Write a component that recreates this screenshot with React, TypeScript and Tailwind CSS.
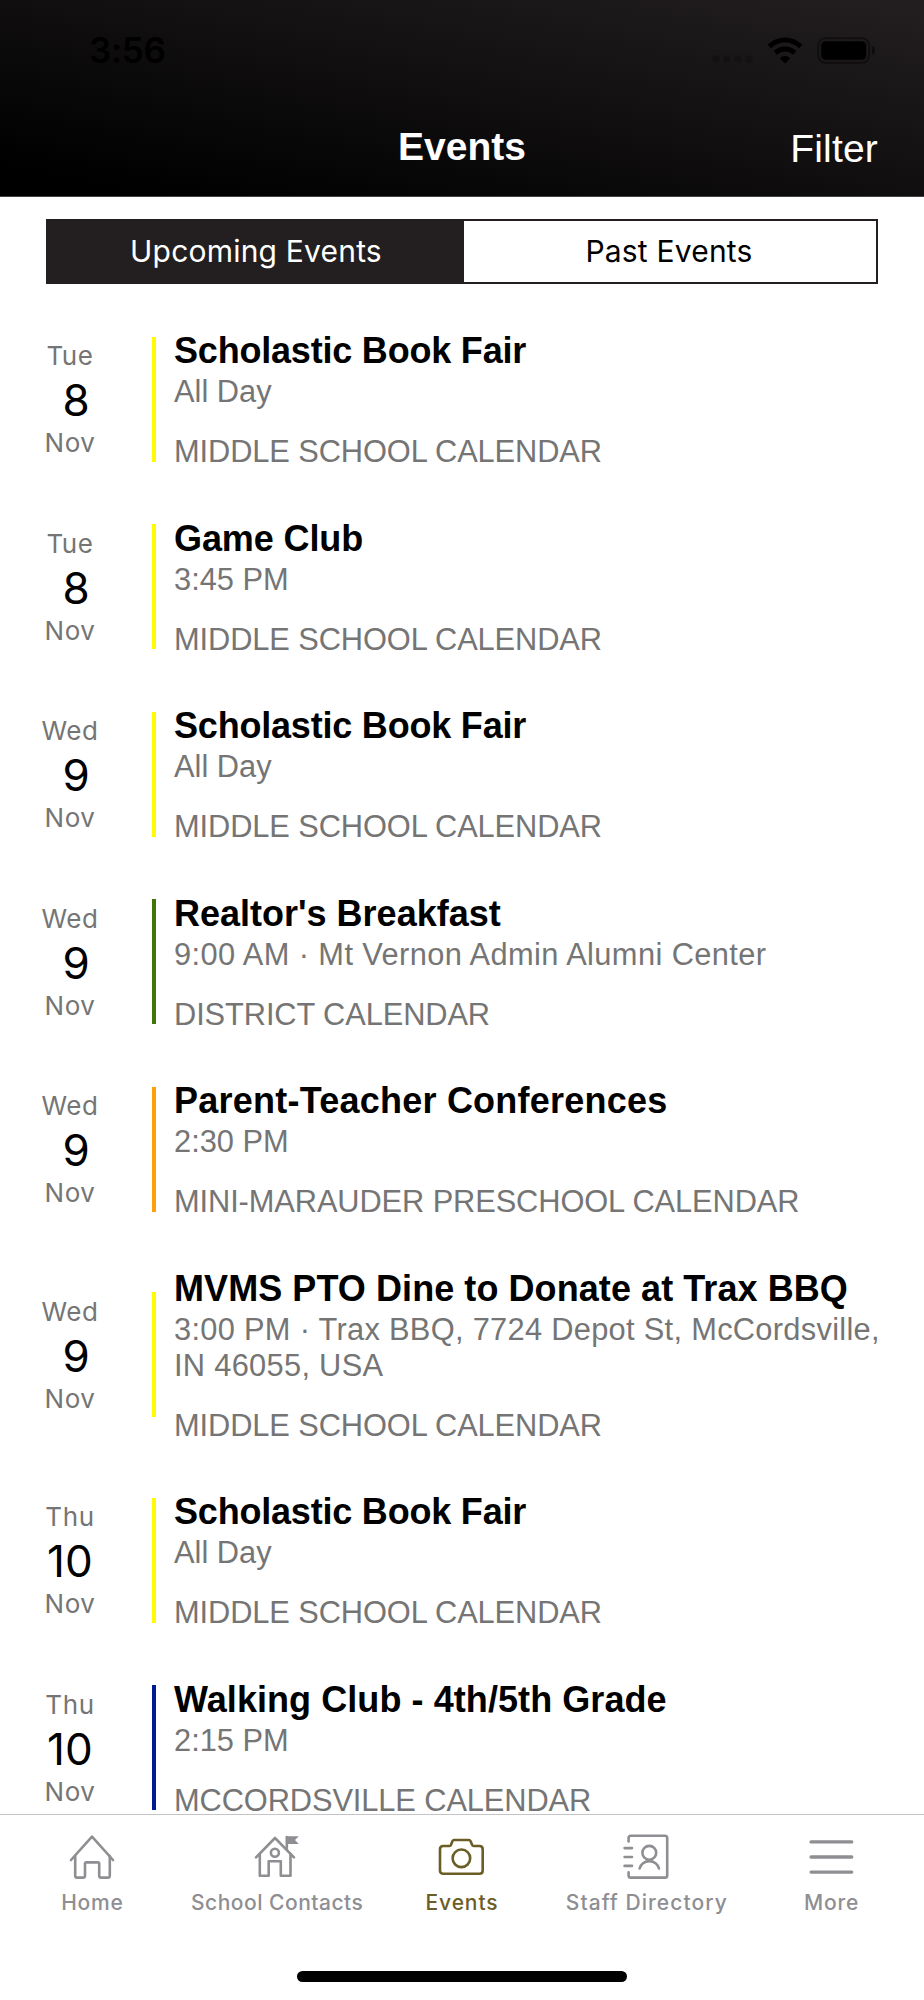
import type { ReactNode } from 'react';
import clsx from 'clsx';

type Event = {
  weekday: string;
  day: number;
  title: string;
  titleClass?: string;
  details: string;
  detailsClass?: string;
  calendar: string;
  color: string;
};

const MIDDLE_SCHOOL = {
  calendar: 'MIDDLE SCHOOL CALENDAR',
  color: 'bg-[#fffb00]',
};

const BOOK_FAIR = {
  title: 'Scholastic Book Fair',
  titleClass: 'tracking-[-0.2px]',
  details: 'All Day',
  ...MIDDLE_SCHOOL,
};

const events: Event[] = [
  { weekday: 'Tue', day: 8, ...BOOK_FAIR },
  {
    weekday: 'Tue',
    day: 8,
    title: 'Game Club',
    titleClass: 'tracking-[-0.1px]',
    details: '3:45 PM',
    ...MIDDLE_SCHOOL,
  },
  { weekday: 'Wed', day: 9, ...BOOK_FAIR },
  {
    weekday: 'Wed',
    day: 9,
    title: "Realtor's Breakfast",
    details: '9:00 AM · Mt Vernon Admin Alumni Center',
    detailsClass: 'tracking-[0.4px]',
    calendar: 'DISTRICT CALENDAR',
    color: 'bg-[#417505]',
  },
  {
    weekday: 'Wed',
    day: 9,
    title: 'Parent-Teacher Conferences',
    titleClass: 'tracking-[0.23px]',
    details: '2:30 PM',
    calendar: 'MINI-MARAUDER PRESCHOOL CALENDAR',
    color: 'bg-[#ff9f0a]',
  },
  {
    weekday: 'Wed',
    day: 9,
    title: 'MVMS PTO Dine to Donate at Trax BBQ',
    titleClass: 'tracking-[0.07px]',
    details: '3:00 PM · Trax BBQ, 7724 Depot St, McCordsville, IN 46055, USA',
    detailsClass: 'tracking-[0.3px]',
    ...MIDDLE_SCHOOL,
  },
  { weekday: 'Thu', day: 10, ...BOOK_FAIR },
  {
    weekday: 'Thu',
    day: 10,
    title: 'Walking Club - 4th/5th Grade',
    titleClass: 'tracking-[0.07px]',
    details: '2:15 PM',
    calendar: 'MCCORDSVILLE CALENDAR',
    color: 'bg-[#011993]',
  },
];

function TabIcon({ children }: { children: ReactNode }) {
  return (
    <svg
      className="size-12"
      viewBox="0 0 48 48"
      fill="none"
      stroke="currentColor"
      strokeWidth="2.6"
      strokeLinecap="round"
      strokeLinejoin="round"
    >
      {children}
    </svg>
  );
}

const tabs = [
  {
    label: 'Home',
    labelClass: 'tracking-[0.8px]',
    icon: (
      <TabIcon>
        <path d="M3 27 24 3.7 45 27" />
        <path d="M7.2 23v19.8q0 1.8 1.8 1.8h6.2q1.8 0 1.8-1.8V30.8q0-1.4 1.4-1.4h11.4q1.4 0 1.4 1.4v12q0 1.8 1.8 1.8H40q1.8 0 1.8-1.8V23" />
      </TabIcon>
    ),
  },
  {
    label: 'School Contacts',
    labelClass: 'tracking-[0.5px]',
    icon: (
      <TabIcon>
        <path d="M3 24.3 22 5 41 24.3" />
        <path d="M6.8 21v21.7h8.9V28.3h12.1v14.4h9.7V21" />
        <circle cx="21.9" cy="19.7" r="4" />
        <path d="M33.8 4v12" />
        <path
          d="M33.5 3.3h12.3L42 7l3.8 3.9H33.5z"
          fill="currentColor"
          stroke="none"
        />
      </TabIcon>
    ),
  },
  {
    label: 'Events',
    labelClass: 'tracking-[0.9px]',
    active: true,
    icon: (
      <TabIcon>
        <path d="M5.2 13h6.3q1 0 1.4-1l1.6-4q.5-1 1.5-1h15q1 0 1.5 1l1.7 4q.4 1 1.4 1h5.9q3.2 0 3.2 3.2v21.3q0 3.2-3.2 3.2H5.2q-3.2 0-3.2-3.2V16.2Q2 13 5.2 13z" />
        <circle cx="23.4" cy="25.3" r="8.8" />
      </TabIcon>
    ),
  },
  {
    label: 'Staff Directory',
    labelClass: 'tracking-[1.05px]',
    icon: (
      <TabIcon>
        <path d="M5.6 8.5V5q0-2.2 2.2-2.2H42q2.2 0 2.2 2.2v37.4q0 2.2-2.2 2.2H7.8q-2.2 0-2.2-2.2v-3" />
        <path d="M1.6 15.1H9M1.6 24H9M1.6 32.9H9" />
        <circle cx="26.3" cy="19.8" r="6.9" />
        <path d="M16.6 35.5a9.9 9.2 0 0 1 19.4 0" />
      </TabIcon>
    ),
  },
  {
    label: 'More',
    labelClass: 'tracking-[0.8px]',
    icon: (
      <TabIcon>
        <path d="M3.1 8.9h40.6M3.1 24h40.6M3.1 39.1h40.6" strokeWidth="3.4" />
      </TabIcon>
    ),
  },
];

function StatusBar() {
  return (
    <div className="flex h-25 items-center justify-between pr-12 pl-[89px] text-black">
      <span className="text-[35px] leading-none font-semibold tracking-[-0.3px]">
        3:56
      </span>
      <div className="flex items-center">
        <svg className="mt-[17px] h-2 w-[42px]" viewBox="0 0 42 8">
          <g fill="#000" opacity="0.2">
            <circle cx="4" cy="4" r="3.8" />
            <circle cx="15" cy="4" r="3.8" />
            <circle cx="26" cy="4" r="3.8" />
            <circle cx="37" cy="4" r="3.8" />
          </g>
        </svg>
        <svg className="ml-[13px] h-[27px] w-9" viewBox="0 0 36 27">
          <path d="M18 26.5l-5.2-5.3q5.2-4.4 10.4 0z" />
          <path
            d="M2.2 9.3Q9.5 2.9 18 2.9t15.8 6.4M8.3 15.8Q12.8 12 18 12t9.7 3.8"
            fill="none"
            stroke="#000"
            strokeWidth="5"
          />
        </svg>
        <svg className="ml-[14px] h-[27px] w-[59px]" viewBox="0 0 59 27">
          <rect
            x="1.2"
            y="1.2"
            width="51"
            height="24.6"
            rx="7.5"
            fill="none"
            stroke="#000"
            strokeOpacity="0.4"
            strokeWidth="2.2"
          />
          <rect x="4.2" y="4.2" width="45" height="18.6" rx="4.5" />
          <path d="M55 9q3 1 3 4.5T55 18z" opacity="0.5" />
        </svg>
      </div>
    </div>
  );
}

function EventRow({ event }: { event: Event }) {
  return (
    <li className="flex items-center">
      <div className="flex h-[125px] w-[140px] shrink-0 flex-col items-center pt-[3.5px] font-[Inter,sans-serif] text-[#757575]">
        <span className="text-[26px] leading-8 tracking-[0.6px]">
          {event.weekday}
        </span>
        <span className="mt-[2px] text-[44px] leading-[52px] tracking-[0.2px] whitespace-pre text-black">
          {String(event.day).padStart(2)}
        </span>
        <span className="mt-px text-[26px] leading-8 tracking-[0.5px]">
          Nov
        </span>
      </div>
      <div className={clsx('ml-3 h-[125px] w-1 shrink-0', event.color)} />
      <div className="ml-[18px] w-[714px] text-[30.8px] leading-9 text-[#757575]">
        <h2
          className={clsx(
            'pt-px text-[36px] leading-11 font-bold text-black',
            event.titleClass,
          )}
        >
          {event.title}
        </h2>
        <p className={clsx('mt-px', event.detailsClass)}>{event.details}</p>
        <p className="mt-[30px] mb-[6px] leading-6 tracking-[-0.1px]">
          {event.calendar}
        </p>
      </div>
    </li>
  );
}

export default function App() {
  return (
    <div className="flex h-[2000px] w-[924px] flex-col overflow-hidden bg-white font-['Liberation_Sans',Arial,sans-serif]">
      <header className="h-[197px] shrink-0 border-b border-[#444] bg-[linear-gradient(to_bottom_left,#231f20,#000_92%)]">
        <div className="font-[Inter,sans-serif]">
          <StatusBar />
        </div>
        <div className="grid h-24 grid-cols-3 items-center px-[46px] text-[39px] leading-none text-white">
          <h1 className="col-start-2 pb-[3px] text-center font-bold">Events</h1>
          <button className="text-right tracking-[0.2px]">Filter</button>
        </div>
      </header>

      <main className="min-h-0 flex-1">
        <div className="mx-[46px] mt-[22px] grid h-[65px] grid-cols-[416px_1fr] border-2 border-[#231f20] font-[Inter,sans-serif] text-[30px] tracking-[0.2px]">
          <button className="bg-[#231f20] text-white">Upcoming Events</button>
          <button className="pr-[2px] text-black">Past Events</button>
        </div>
        <ul className="mt-11 flex flex-col gap-[45.5px]">
          {events.map((event, i) => (
            <EventRow key={i} event={event} />
          ))}
        </ul>
      </main>

      <nav className="flex h-[186px] shrink-0 flex-col border-t border-[#c4c4c6] bg-white">
        <div className="grid grid-cols-5 pt-[18px] font-[Inter,sans-serif] text-[21px] font-medium">
          {tabs.map((tab) => (
            <a
              key={tab.label}
              className={clsx(
                'flex flex-col items-center gap-2 leading-7 whitespace-nowrap',
                tab.labelClass,
                tab.active ? 'text-[#6b5d26]' : 'text-[#8e8e93]',
              )}
            >
              {tab.icon}
              {tab.label}
            </a>
          ))}
        </div>
        <div className="mx-auto mt-auto mb-[18px] h-[11px] w-[330px] rounded-full bg-black" />
      </nav>
    </div>
  );
}
